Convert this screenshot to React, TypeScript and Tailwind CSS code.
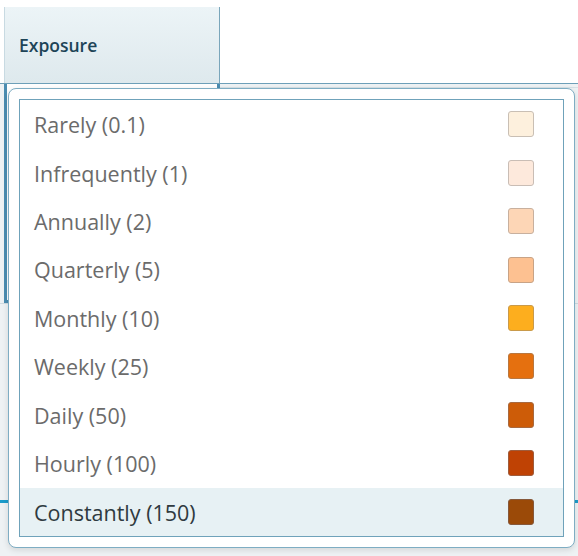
import React from 'react';

interface Level {
  label: string;
  color: string;
  border: string;
}

const levels: Level[] = [
  { label: 'Rarely (0.1)', color: 'bg-[#fdf0dd]', border: 'border-[#c9bfb4]' },
  { label: 'Infrequently (1)', color: 'bg-[#fde9dc]', border: 'border-[#c9bdb5]' },
  { label: 'Annually (2)', color: 'bg-[#fdd6b6]', border: 'border-[#c8b09e]' },
  { label: 'Quarterly (5)', color: 'bg-[#fdc191]', border: 'border-[#c8a386]' },
  { label: 'Monthly (10)', color: 'bg-[#fdae1e]', border: 'border-[#c99a4a]' },
  { label: 'Weekly (25)', color: 'bg-[#e5700f]', border: 'border-[#b9773f]' },
  { label: 'Daily (50)', color: 'bg-[#cd5c08]', border: 'border-[#a8693f]' },
  { label: 'Hourly (100)', color: 'bg-[#bf4204]', border: 'border-[#9f5c3c]' },
  { label: 'Constantly (150)', color: 'bg-[#9b4a08]', border: 'border-[#86583a]' },
];

const selected = 'Constantly (150)';

export default function App() {
  return (
    <div className="relative w-[578px] h-[556px] overflow-hidden bg-white font-['Open_Sans',sans-serif]">
      {/* Table header */}
      <div className="pt-[7px] pl-[4px]">
        <div className="flex h-[76px] w-[216px] items-center border-l border-r border-l-[#c8dae2] border-r-[#7aa6bb] bg-gradient-to-b from-[#ecf4f7] to-[#dee9ed] pl-[14px] text-[17.5px] font-semibold text-[#1d4457]">
          Exposure
        </div>
      </div>

      {/* Table body behind the menu */}
      <div className="h-[473px] border-t border-[#6d9fb8] bg-[#eef2f4]">
        <div className="flex">
          <div className="ml-[4px] h-[219px] w-[216px] border-[3px] border-t-0 border-[#4b8db1] bg-white" />
          <div className="h-[4px] flex-1 border-b border-[#d7e2e7]" />
        </div>
        <div className="h-px bg-[#cfdbe1]" />
        <div className="mt-[196px] h-[3px] bg-[#1b9ccb]" />
      </div>

      {/* Dropdown menu */}
      <div className="absolute left-[8px] top-[88px] w-[567px] h-[460px] rounded-[8px] border border-[#7eadc3] bg-white p-[10px] shadow-[0_2px_6px_rgba(0,0,0,0.12)]">
        <div className="flex h-full flex-col border border-[#6fa2ba]">
          {levels.map((level) => {
            const isSel = level.label === selected;
            return (
              <div
                key={level.label}
                className={`flex h-[48.5px] items-center justify-between pl-[14px] pr-[29px] text-[21.5px] ${
                  isSel ? 'bg-[#e7f1f4] text-[#2f3a40]' : 'text-[#6b6b6b]'
                }`}
              >
                <span className="mt-[2px]">{level.label}</span>
                <span className={`h-[26px] w-[26px] rounded-[3px] border ${level.color} ${level.border}`} />
              </div>
            );
          })}
        </div>
      </div>
    </div>
  );
}
